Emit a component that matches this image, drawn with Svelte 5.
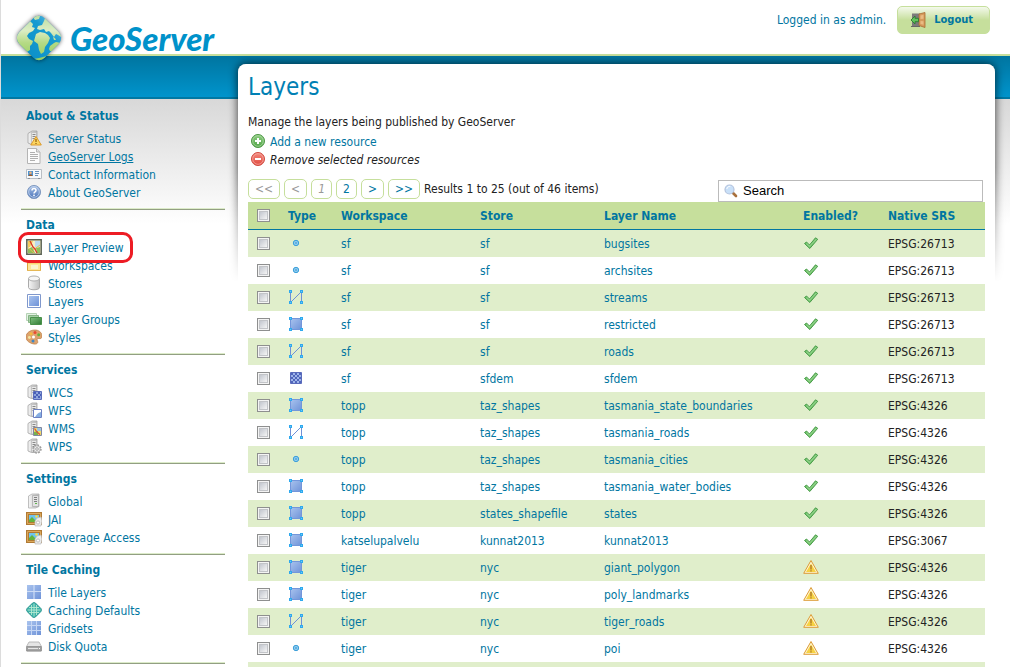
<script>
  const server =
    '<path d="M2 3.500 6 1h5v13.500H5.500L2 13z" fill="url(#metal)" stroke="#a2a2a2" stroke-width=".8"/><path d="M5.500 2.500h5v11.500h-5z" fill="#e9e9e9" stroke="#b0b0b0" stroke-width=".6"/><path d="M6.500 4.500h3M6.500 6.500h3M6.500 8.500h3" stroke="#8a8a8a"/>';
  const picture =
    '<path d="M0 1h16v13H0z" fill="#b07a34"/><path d="M1.500 2.500h13v10h-13z" fill="none" stroke="#dca95c"/><path d="M3 4h10v7H3z" fill="#6fc3ee"/><path d="M3 9l3-3 3 3 2-1 2 1v2H3z" fill="#62b53c"/><circle cx="10.500" cy="5.500" r="1.300" fill="#f7e14a"/><path d="M9 10l2-3 4-1 1 4-1 5H9z" fill="#ececec" stroke="#bbb" stroke-width=".7"/><circle cx="12" cy="11.500" r="1.600" fill="#fff" stroke="#aaa" stroke-width=".7"/>';

  const icons = {
    serverWarn:
      server +
      '<path d="M10 6.500 15.300 15H4.800z" fill="#fbd560" stroke="#dd9a2b" stroke-linejoin="round"/><path d="M10 9v3M10 13v1" stroke="#8c5a10" stroke-width="1.200"/>',
    page: '<path d="M1.500.5h9l3.500 3.500v11.500H1.500z" fill="#fcfcfc" stroke="#b4b4b4"/><path d="M10.500.5V4H14" fill="#e4e4e4" stroke="#b4b4b4"/><path d="M4 4.500h5M4 6.500h8M4 8.500h8M4 10.500h8M4 12.500h5" stroke="#b0b0b0"/>',
    card: '<path d="M.5 3.500h15v9H.5z" fill="#f7f9fb" stroke="#b9bec4"/><path d="M2 5h5v5H2z" fill="#4c93d2"/><circle cx="4.500" cy="6.800" r="1.300" fill="#f0b27a"/><path d="M2.500 10c0-2 4-2 4 0z" fill="#a55a22"/><path d="M9 5.500h4M9 7.500h4M9 9.500h3" stroke="#6b93bd"/><path d="M2 12.500h2M12 12.500h2" stroke="#8d949b"/>',
    help: '<circle cx="8" cy="8" r="6.600" fill="url(#blueBall)" stroke="#7d96bd" stroke-width=".9"/><circle cx="8" cy="8" r="5.300" fill="none" stroke="#c7d7ee" stroke-width=".8"/><path d="M6 6.500c0-2.600 4-2.600 4 0C10 8 8 7.800 8 9.500" fill="none" stroke="#fff" stroke-width="1.500"/><circle cx="8" cy="11.300" r=".9" fill="#fff"/>',
    preview:
      '<path d="M.8.8h14.400v14.400H.8z" fill="#f6efc4" stroke="#5d6456" stroke-width="1.500"/><path d="M9 2h5v6H9z" fill="#bcd9ec"/><path d="M2 2h5L4 8H2z" fill="#f4cb5c"/><path d="M2 10l4-2 3 6H2zM10 9l4-1v6h-3z" fill="#8dbf59"/><path d="M2 8.500 8 14M7 11l7-5" stroke="#e9bb52"/><path d="M4 2l3 6 2 2 2 4" fill="none" stroke="#d8392b" stroke-width="1.300"/>',
    folder:
      '<path d="M1.500 13.500v-10h5l1.500 2h6.500v8z" fill="#f5c64d" stroke="#dca53a"/><path d="M2 6.500h12.200v6.800H2z" fill="#fde59a"/><path d="M5 8h7v4H5z" fill="#fbf3cf"/>',
    store:
      '<path d="M2.500 3.500v9c0 3 11 3 11 0v-9z" fill="url(#metal)" stroke="#aaa"/><ellipse cx="8" cy="3.500" rx="5.500" ry="2.500" fill="#f6f6f6" stroke="#b0b0b0"/>',
    layer:
      '<path d="M1.500 1.500h13v13h-13z" fill="#fff" stroke="#8098cc"/><path d="M3 3h10v10H3z" fill="url(#blueSq)"/>',
    group:
      '<path d="M.5 2.500h10v7H.5z" fill="#e4f1e4" stroke="#b4d2b4"/><path d="M2.500 4.500h10v7h-10z" fill="#a6cfa6" stroke="#85b485"/><path d="M4.500 6.500h11v7h-11z" fill="url(#greenSq)" stroke="#4a914a"/>',
    palette:
      '<path d="M8.500 1C12.500.800 16 3.300 16 7c0 2-1 3-3 2.500-2-.4-2.500 1-1.500 2.500 1 2-1 3.500-3.500 3C4 14.300 0 12 0 8c0-4 4-6.800 8.500-7z" fill="#dda36e" stroke="#b97840" stroke-width=".7"/><circle cx="9" cy="3.600" r="1.500" fill="#e84b32"/><circle cx="5" cy="4.800" r="1.500" fill="#f5b83d"/><circle cx="12.700" cy="5.800" r="1.500" fill="#62b33c"/><circle cx="3.400" cy="8.500" r="1.400" fill="#f3e7a0"/><circle cx="7.500" cy="8" r="1.500" fill="#fff"/><circle cx="7" cy="12" r="1.500" fill="#3c87c7"/>',
    wcs:
      server +
      '<path d="M7.500 7.500h8v8h-8z" fill="#8fa5dc" stroke="#5a6cba"/><path d="M8 8h2v2H8zM12 8h2v2h-2zM10 10h2v2h-2zM14 10h1v2h-1zM8 12h2v2H8zM12 12h2v2h-2z" fill="#4a60b8"/>',
    wfs:
      server +
      '<path d="M7.500 7.500h8v8h-8z" fill="#fff" stroke="#6c80c2"/><path d="M9 15c1-1 2-4 6-5v5z" fill="#86aee2"/>',
    wms:
      server +
      '<path d="M7.500 7.500h8v8h-8z" fill="#f3dc6a" stroke="#8086a0"/><path d="M11 8h4v3h-4z" fill="#9cc6e4"/><path d="M8 12l4-1v4H8z" fill="#79b34e"/><path d="M8.500 8.500 11 12l3 2.500" fill="none" stroke="#d8503a" stroke-width="1.200"/>',
    wps:
      server +
      '<circle cx="11" cy="11" r="3.600" fill="#e8e8e8" stroke="#999" stroke-width="2.200" stroke-dasharray="1.600 1.200"/><circle cx="11" cy="11" r="3.200" fill="#ededed" stroke="#aaa" stroke-width=".7"/><circle cx="11" cy="11" r="1.300" fill="#fff" stroke="#888" stroke-width=".8"/>',
    global:
      '<path d="M2.500 3 6 1h7v12.500L9.500 15h-7z" fill="url(#metal)" stroke="#b0b0b0" stroke-width=".8"/><path d="M6.500 2.500h6v11h-6z" fill="#e2e2e2" stroke="#a6a6a6" stroke-width=".7"/><path d="M8 4.500h3M8 6.500h3M8 8.500h3" stroke="#7f7f7f"/><path d="M9 10.500h2" stroke="#5db54a"/>',
    picture,
    tiles:
      '<path d="M1 1h14v14H1z" fill="url(#blueSq)"/><path d="M8 1v14M1 7.500h14" stroke="#cddcf5" stroke-width="1.200"/>',
    gem: '<path d="M6.500 1.100q1.500-1 3 0l5.400 5.400q1 1.500 0 3l-5.400 5.400q-1.500 1-3 0L1.100 9.500q-1-1.500 0-3z" fill="#3fb3ab" stroke="#2a958f"/><path d="M5.500 3v10M10.500 3v10M8 1.500v13M3 5.500h10M3 10.500h10M1.500 8h13" stroke="#b5ead0" stroke-width=".9"/>',
    grid: '<path d="M1 1h14v14H1z" fill="url(#blueSq)"/><path d="M5.500 1v14M10.500 1v14M1 5.500h14M1 10.500h14" stroke="#c5d6f4"/>',
    disk: '<path d="M3 4h10l2.500 4.500v4.500H.500V8.500z" fill="#e5e5e5" stroke="#acacac" stroke-width=".8"/><path d="M.8 8.500h14.400V13H.8z" fill="#a5a5a5" stroke="#858585" stroke-width=".7"/><path d="M2 10.500h10" stroke="#e6e6e6"/><path d="M13 10.500h1" stroke="#fff"/>',
    add: '<circle cx="7" cy="8" r="6.500" fill="url(#greenBall)" stroke="#4d9645"/><circle cx="7" cy="8" r="5.300" fill="none" stroke="#a9d8a0" stroke-width=".8"/><path d="M7 5v6M4 8h6" stroke="#fff" stroke-width="2"/>',
    remove:
      '<circle cx="7" cy="8" r="6.500" fill="url(#redBall)" stroke="#cf4a40"/><circle cx="7" cy="8" r="5.300" fill="none" stroke="#f5aaa2" stroke-width=".8"/><path d="M4 8h6" stroke="#fff" stroke-width="2"/>',
    search:
      '<path d="M10 10l3 3" stroke="#a8703c" stroke-width="2.600" stroke-linecap="round"/><circle cx="6.500" cy="6.500" r="4.500" fill="#c9e0f8" stroke="#b3c2dc" stroke-width="1.200"/><path d="M3.800 6c.4-2 2-2.800 3.500-2.600" stroke="#fff" fill="none"/>',
    door: '<path d="M2 1.500h8v13H2z" fill="#7b7b7b"/><path d="M1 14.500h9" stroke="#666"/><path d="M9 2l6-1.500v15L9 13.500z" fill="#d59a5c" stroke="#a96c33" stroke-width=".8"/><path d="M10.500 3.500l3-.7v4l-3 .2zM10.500 9l3 .2v3.500l-3-.7z" fill="#e9bb83"/><path d="M1 8l4-4v2.300h3.500v3.400H5V12z" fill="#62c35c" stroke="#2c7d31" stroke-width=".9"/>',
    point: '<circle cx="8" cy="8" r="2.700" fill="#8accf0" stroke="#3d9fd9"/><circle cx="8" cy="8" r="1" fill="#5aa4d8"/>',
    line: '<path d="M2.500 2.500v11l11-11v11" fill="none" stroke="#6f90d6"/><path d="M1 1h3v3H1zM12 1h3v3h-3zM1 12h3v3H1zM12 12h3v3h-3z" fill="#2fa9ee"/><path d="M2 2h1v1H2zM13 2h1v1h-1zM2 13h1v1H2zM13 13h1v1h-1z" fill="#6cc8f7"/>',
    polygon:
      '<path d="M2.500 2.500h11v11h-11z" fill="url(#blueSq)" stroke="#7396da"/><path d="M1 1h3v3H1zM12 1h3v3h-3zM1 12h3v3H1zM12 12h3v3h-3z" fill="#2fa9ee"/><path d="M2 2h1v1H2zM13 2h1v1h-1zM2 13h1v1H2zM13 13h1v1h-1z" fill="#6cc8f7"/>',
    raster:
      '<path d="M2.500 2.500h11v11h-11z" fill="#9db4e8" stroke="#5a6bbb"/><path d="M3 3h2v2H3zM7 3h2v2H7zM11 3h2v2h-2zM5 5h2v2H5zM9 5h2v2H9zM3 7h2v2H3zM7 7h2v2H7zM11 7h2v2h-2zM5 9h2v2H5zM9 9h2v2H9zM3 11h2v2H3zM7 11h2v2H7zM11 11h2v2h-2z" fill="#5065bb"/>',
    ok: '<path d="M1.500 8.500 3.500 7l3 3 6-7.200 2.200 1.500L6.800 13.500z" fill="#67bf62" stroke="#4a9c4a" stroke-linejoin="round"/><path d="M3.500 8.500 6.500 11.500l7-7.500" stroke="#8fd088" fill="none" stroke-width="1.200"/>',
    warn: '<path d="M8 1.500 15.300 14.300H.7z" fill="#fff6d2" stroke="#dc9a35" stroke-linejoin="round"/><path d="M8 4.500 13 13H3z" fill="#f6d142"/><path d="M8 6v4.500M8 11.200v1.300" stroke="#b8862c" stroke-width="1.600"/>'
  };

  const sections = [
    ['About & Status', [['serverWarn', 'Server Status'], ['page', 'GeoServer Logs'], ['card', 'Contact Information'], ['help', 'About GeoServer']]],
    ['Data', [['preview', 'Layer Preview'], ['folder', 'Workspaces'], ['store', 'Stores'], ['layer', 'Layers'], ['group', 'Layer Groups'], ['palette', 'Styles']]],
    ['Services', [['wcs', 'WCS'], ['wfs', 'WFS'], ['wms', 'WMS'], ['wps', 'WPS']]],
    ['Settings', [['global', 'Global'], ['picture', 'JAI'], ['picture', 'Coverage Access']]],
    ['Tile Caching', [['tiles', 'Tile Layers'], ['gem', 'Caching Defaults'], ['grid', 'Gridsets'], ['disk', 'Disk Quota']]]
  ];
  const hovered = 'GeoServer Logs';
  const highlighted = 'Layer Preview';

  const pages = [
    ['<<', false], ['<', false], ['1', false], ['2', true], ['>', true], ['>>', true]
  ];
  const columns = ['Type', 'Workspace', 'Store', 'Layer Name', 'Enabled?', 'Native SRS'];

  const layers = [
    ['point', 'sf', 'sf', 'bugsites', 'ok', 'EPSG:26713'],
    ['point', 'sf', 'sf', 'archsites', 'ok', 'EPSG:26713'],
    ['line', 'sf', 'sf', 'streams', 'ok', 'EPSG:26713'],
    ['polygon', 'sf', 'sf', 'restricted', 'ok', 'EPSG:26713'],
    ['line', 'sf', 'sf', 'roads', 'ok', 'EPSG:26713'],
    ['raster', 'sf', 'sfdem', 'sfdem', 'ok', 'EPSG:26713'],
    ['polygon', 'topp', 'taz_shapes', 'tasmania_state_boundaries', 'ok', 'EPSG:4326'],
    ['line', 'topp', 'taz_shapes', 'tasmania_roads', 'ok', 'EPSG:4326'],
    ['point', 'topp', 'taz_shapes', 'tasmania_cities', 'ok', 'EPSG:4326'],
    ['polygon', 'topp', 'taz_shapes', 'tasmania_water_bodies', 'ok', 'EPSG:4326'],
    ['polygon', 'topp', 'states_shapefile', 'states', 'ok', 'EPSG:4326'],
    ['polygon', 'katselupalvelu', 'kunnat2013', 'kunnat2013', 'ok', 'EPSG:3067'],
    ['polygon', 'tiger', 'nyc', 'giant_polygon', 'warn', 'EPSG:4326'],
    ['polygon', 'tiger', 'nyc', 'poly_landmarks', 'warn', 'EPSG:4326'],
    ['line', 'tiger', 'nyc', 'tiger_roads', 'warn', 'EPSG:4326'],
    ['point', 'tiger', 'nyc', 'poi', 'warn', 'EPSG:4326']
  ];

  let search = $state('Search');
  let checked = $state(layers.map(() => false));
  let all = $state(false);
  function toggleAll() {
    checked = layers.map(() => all);
  }
</script>

{#snippet icon(name)}
  <svg class="icon" viewBox="0 0 16 16" aria-hidden="true">{@html icons[name]}</svg>
{/snippet}

<svg class="defs" width="0" height="0" aria-hidden="true">
  <defs>
    <linearGradient id="metal"><stop stop-color="#f6f6f6" /><stop offset="1" stop-color="#bdbdbd" /></linearGradient>
    <linearGradient id="blueSq" x2="1" y2="1"><stop stop-color="#a9c3ee" /><stop offset="1" stop-color="#6f93d8" /></linearGradient>
    <linearGradient id="greenSq" x2="1" y2="1"><stop stop-color="#7fc07f" /><stop offset="1" stop-color="#2f7a34" /></linearGradient>
    <linearGradient id="blueBall" x2="0" y2="1"><stop stop-color="#a9c2e8" /><stop offset="1" stop-color="#4b74b8" /></linearGradient>
    <linearGradient id="greenBall" x2="0" y2="1"><stop stop-color="#8fce82" /><stop offset="1" stop-color="#4fa346" /></linearGradient>
    <linearGradient id="redBall" x2="0" y2="1"><stop stop-color="#f4897e" /><stop offset="1" stop-color="#e0483d" /></linearGradient>
    <linearGradient id="ocean" gradientUnits="userSpaceOnUse" x1="0" y1="2" x2="0" y2="50"><stop stop-color="#5cb8de" /><stop offset=".3" stop-color="#169bd1" /><stop offset="1" stop-color="#0b8fc8" /></linearGradient>
    <linearGradient id="land" gradientUnits="userSpaceOnUse" x1="0" y1="2" x2="0" y2="50"><stop stop-color="#b9dca0" /><stop offset=".35" stop-color="#dcedc4" /><stop offset=".6" stop-color="#b5da85" /><stop offset="1" stop-color="#93cc58" /></linearGradient>
    <clipPath id="gem"><rect x="8" y="8" width="36" height="36" rx="8" transform="rotate(45 26 26)" /></clipPath>
  </defs>
</svg>

<div class="page">
  <header>
    <a class="logo" href="#home">
      <svg class="globe" viewBox="0 0 52 52" aria-hidden="true">
        <rect x="8" y="8" width="36" height="36" rx="8" transform="rotate(45 26 26)" fill="url(#ocean)" />
        <g clip-path="url(#gem)" fill="url(#land)">
          <path d="M0 26 17 9l3 3-1 3 3 1-2 3-4 2-2 3 2 3 4 2-1 3-2 2 0 4-3 2z" />
          <path d="M20 5l4-2 3 1-1 3-4 1z" />
          <path d="M33 3l19 20-2 3-5-3-2-1-2 3-3-4-2-2-3 1-2-3-4 1-3-1 1-3 4-1 2-4z" />
          <path d="M23 22l4-2 5 1 3 2 2 3-2 5-3 4-1 5-3 2-2-4-1-6-4-3z" />
          <path d="M37 34l4-3 2-1 5 1-7 9-4-1-1-2z" />
          <path d="M20 47l6-1 8-2 4-1-6 8h-8z" />
          <path d="M40 25l2 1 1 2-2 0z" />
        </g>
      </svg>
      <span>GeoServer</span>
    </a>
    <div class="user">
      <span>Logged in as admin.</span>
      <button class="logout" type="button">{@render icon('door')}Logout</button>
    </div>
  </header>

  <div class="body">
    <nav>
      {#each sections as [title, links]}
        <section>
          <h2>{title}</h2>
          <ul>
            {#each links as [name, label]}
              <li class:mark={label === highlighted}>
                <a href="#top" class:hover={label === hovered}>{@render icon(name)}<span>{label}</span></a>
              </li>
            {/each}
          </ul>
        </section>
      {/each}
    </nav>

    <main>
      <div class="shade"><div></div></div>
      <h1>Layers</h1>
      <p>Manage the layers being published by GeoServer</p>
      <ul class="actions">
        <li><a href="#add">{@render icon('add')}Add a new resource</a></li>
        <li class="off">{@render icon('remove')}Remove selected resources</li>
      </ul>

      <div class="tools">
        <div class="pager">
          {#each pages as [label, enabled]}
            <button type="button" disabled={!enabled}>{label}</button>
          {/each}
          <span>Results 1 to 25 (out of 46 items)</span>
        </div>
        <label class="search">
          {@render icon('search')}
          <input type="text" aria-label="Search" bind:value={search} />
        </label>
      </div>

      <table>
        <colgroup>
          <col class="c-check" /><col class="c-type" /><col class="c-ws" /><col class="c-store" />
          <col class="c-name" /><col class="c-on" /><col class="c-srs" />
        </colgroup>
        <thead>
          <tr>
            <th class="check"><input type="checkbox" aria-label="Select all" bind:checked={all} onchange={toggleAll} /></th>
            {#each columns as column}
              <th><a href="#sort">{column}</a></th>
            {/each}
          </tr>
        </thead>
        <tbody>
          {#each layers as [type, workspace, store, name, state, srs], i}
            <tr>
              <td class="check"><input type="checkbox" aria-label={name} bind:checked={checked[i]} /></td>
              <td>{@render icon(type)}</td>
              <td><a href="#workspace">{workspace}</a></td>
              <td><a href="#store">{store}</a></td>
              <td><a href="#layer">{name}</a></td>
              <td>{@render icon(state)}</td>
              <td>{srs}</td>
            </tr>
          {/each}
        </tbody>
        <tfoot>
          <tr><td colspan="7"></td></tr>
        </tfoot>
      </table>
    </main>
  </div>
</div>

<style>
  :global(body) {
    background: #fff;
  }
  .page {
    box-sizing: border-box;
    min-height: 100vh;
    border-left: 1px solid #dcdcdc;
    font: 12px/18px "DejaVu Sans Condensed", "DejaVu Sans", sans-serif;
    color: #222;
  }
  .defs {
    position: absolute;
  }
  a {
    color: #0076a1;
    text-decoration: none;
  }
  ul,
  h1,
  h2,
  p {
    margin: 0;
    padding: 0;
    list-style: none;
  }
  button {
    font: inherit;
    cursor: pointer;
  }
  .icon {
    width: 16px;
    height: 16px;
    flex: none;
    display: block;
  }
  li .icon,
  td .icon {
    margin-bottom: 2px;
  }

  header {
    display: flex;
    justify-content: space-between;
    align-items: flex-start;
    height: 54px;
    border-bottom: 2px solid #c6df9c;
  }
  .logo {
    display: flex;
    align-items: flex-start;
    gap: 5px;
    padding: 12px 0 0 12px;
    position: relative;
    z-index: 1;
    font: italic 900 33px/52px Lato, "Open Sans", sans-serif;
    color: #0092ca;
  }
  .globe {
    width: 52px;
    height: 52px;
    filter: drop-shadow(0 0 2px rgba(0, 0, 0, 0.6));
  }
  .user {
    display: flex;
    align-items: center;
    gap: 11px;
    padding: 6px 20px 0 0;
    color: #0076a1;
  }
  .logout {
    display: flex;
    align-items: center;
    gap: 8px;
    height: 28px;
    padding: 0 16px 0 12px;
    border: 1px solid #c6df9c;
    border-radius: 5px;
    background: linear-gradient(#f4f9ec, #c6df9c 50%);
    font-weight: 700;
    font-size: 11px;
    color: #0076a1;
  }

  .body {
    display: grid;
    grid-template-columns: 237px minmax(0, 1fr);
    padding-right: 15px;
    background:
      linear-gradient(#0075a0, #0094cc 41px, #0078a3 41px) 0 0 / 100% 43px no-repeat,
      linear-gradient(#d8d8d8, #fff) 0 43px / 100% 125px no-repeat;
  }
  nav {
    padding: 46px 13px 0 20px;
  }
  section {
    padding-bottom: 7px;
    border-bottom: 1px solid #929f82;
    box-shadow: inset 0 -1px #dcebc9;
    margin-bottom: 1px;
  }
  h2 {
    padding: 4px 5px;
    font-size: 12px;
    line-height: 20px;
    color: #0076a1;
  }
  li a,
  .off {
    display: flex;
    align-items: center;
    gap: 6px;
    height: 18px;
  }
  nav li {
    padding-left: 5px;
  }
  .hover span {
    text-decoration: underline;
  }
  .mark {
    position: relative;
  }
  .mark::after {
    content: "";
    position: absolute;
    left: -3px;
    top: -7px;
    width: 109px;
    height: 25px;
    border: 3px solid #ed1c24;
    border-radius: 10px;
    pointer-events: none;
  }

  main {
    position: relative;
    isolation: isolate;
    margin-top: 8px;
    padding: 7px 10px 0;
    border-radius: 8px 8px 0 0;
    background: #fff;
  }
  .shade {
    position: absolute;
    z-index: -1;
    inset: -12px -12px auto;
    height: 230px;
    overflow: hidden;
    mask-image: linear-gradient(#000 50%, transparent);
  }
  .shade div {
    position: absolute;
    inset: 12px 12px -20px;
    border-radius: 8px;
    background: #fff;
    box-shadow: 0 0 10px rgba(0, 0, 0, 0.75);
  }
  h1 {
    font-size: 24px;
    font-weight: 400;
    line-height: 32px;
    color: #0080b4;
  }
  p {
    margin-top: 10px;
  }
  .actions {
    padding: 2px 0 10px 3px;
  }
  .actions a,
  .off {
    gap: 3px;
  }
  .off {
    font-style: italic;
  }

  .tools {
    display: flex;
    justify-content: space-between;
    padding-right: 2px;
  }
  .pager {
    display: flex;
    gap: 4px;
    height: 20px;
    line-height: 20px;
    margin-bottom: 3px;
  }
  .pager button {
    padding: 0 6px;
    border: 1px solid #c6df9c;
    border-radius: 5px;
    background: #fff;
    color: #0076a1;
    line-height: 18px;
  }
  .pager button:disabled {
    color: #999;
    font-style: italic;
  }
  .search {
    display: flex;
    align-items: center;
    box-sizing: border-box;
    width: 265px;
    height: 22px;
    margin-top: 1px;
    padding-left: 4px;
    gap: 4px;
    border: 1px solid #bbb;
    background: #fff;
  }
  .search input {
    flex: 1;
    min-width: 0;
    padding: 0;
    border: 0;
    outline: 0;
    background: none;
    font: 13px/18px "Liberation Sans", sans-serif;
    color: #000;
  }

  table {
    width: 100%;
    table-layout: fixed;
    border-collapse: separate;
    border-spacing: 0;
  }
  .c-check { width: 35px; }
  .c-type { width: 53px; }
  .c-ws { width: 139px; }
  .c-store { width: 124px; }
  .c-name { width: 199px; }
  .c-on { width: 85px; }
  .c-srs { width: 102px; }
  th,
  td {
    height: 27px;
    padding: 0 5px;
    text-align: left;
    vertical-align: middle;
    white-space: nowrap;
  }
  th {
    background: #c6df9c;
    border-bottom: 1px solid #0076a1;
  }
  tbody tr:nth-child(odd),
  tfoot tr {
    background: #e0eecb;
  }
  tfoot td {
    height: 5px;
  }
  .check {
    padding: 0 9px;
  }
  .check input {
    display: block;
    appearance: none;
    box-sizing: border-box;
    width: 13px;
    height: 13px;
    margin: 0;
    padding: 2px;
    border: 1px solid #8e8f8f;
    background:
      linear-gradient(135deg, #c3c7cf, #f5f5f5) content-box,
      #f4f4f4;
    box-shadow: inset 0 0 0 1px #f4f4f4, inset 0 0 0 2px #c2c4c8;
  }
  .check input:checked {
    background: #0076a1 content-box;
  }
</style>
